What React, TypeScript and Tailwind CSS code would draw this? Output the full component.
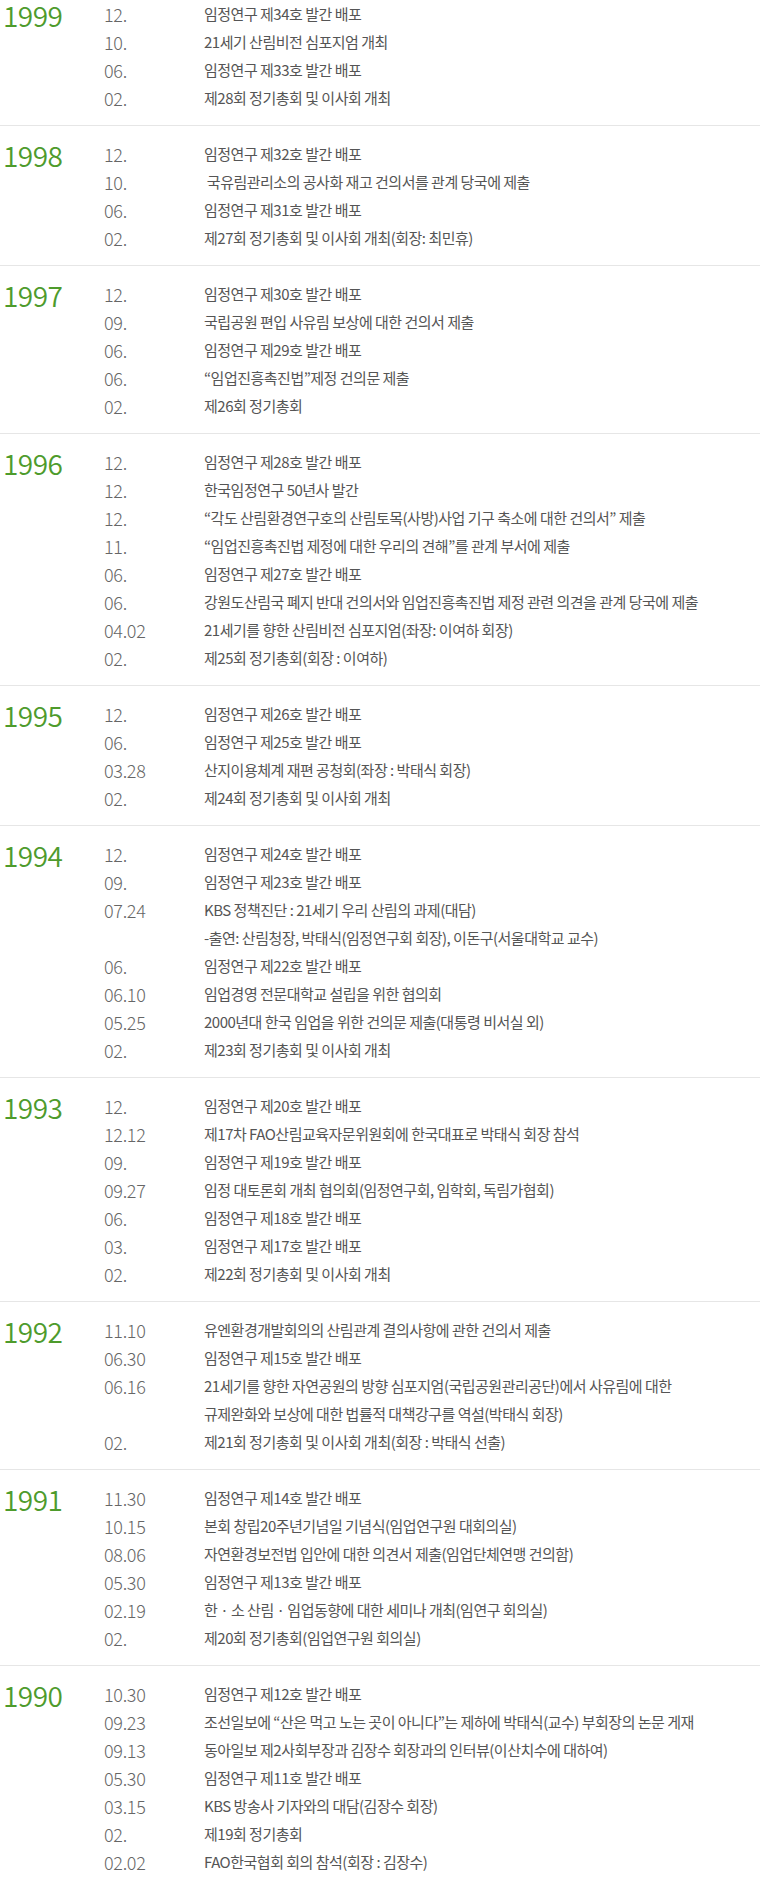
import React from 'react';

type Item = { date: string; text: string };
type Section = { year: string; items: Item[] };

const history: Section[] = [
  {
    year: '1999',
    items: [
      { date: '12.', text: '임정연구 제34호 발간 배포' },
      { date: '10.', text: '21세기 산림비전 심포지엄 개최' },
      { date: '06.', text: '임정연구 제33호 발간 배포' },
      { date: '02.', text: '제28회 정기총회 및 이사회 개최' },
    ],
  },
  {
    year: '1998',
    items: [
      { date: '12.', text: '임정연구 제32호 발간 배포' },
      { date: '10.', text: '\u00a0국유림관리소의 공사화 재고 건의서를 관계 당국에 제출' },
      { date: '06.', text: '임정연구 제31호 발간 배포' },
      { date: '02.', text: '제27회 정기총회 및 이사회 개최(회장: 최민휴)' },
    ],
  },
  {
    year: '1997',
    items: [
      { date: '12.', text: '임정연구 제30호 발간 배포' },
      { date: '09.', text: '국립공원 편입 사유림 보상에 대한 건의서 제출' },
      { date: '06.', text: '임정연구 제29호 발간 배포' },
      { date: '06.', text: '“임업진흥촉진법”제정 건의문 제출' },
      { date: '02.', text: '제26회 정기총회' },
    ],
  },
  {
    year: '1996',
    items: [
      { date: '12.', text: '임정연구 제28호 발간 배포' },
      { date: '12.', text: '한국임정연구 50년사 발간' },
      { date: '12.', text: '“각도 산림환경연구호의 산림토목(사방)사업 기구 축소에 대한 건의서” 제출' },
      { date: '11.', text: '“임업진흥촉진법 제정에 대한 우리의 견해”를 관계 부서에 제출' },
      { date: '06.', text: '임정연구 제27호 발간 배포' },
      { date: '06.', text: '강원도산림국 폐지 반대 건의서와 임업진흥촉진법 제정 관련 의견을 관계 당국에 제출' },
      { date: '04.02', text: '21세기를 향한 산림비전 심포지엄(좌장: 이여하 회장)' },
      { date: '02.', text: '제25회 정기총회(회장 : 이여하)' },
    ],
  },
  {
    year: '1995',
    items: [
      { date: '12.', text: '임정연구 제26호 발간 배포' },
      { date: '06.', text: '임정연구 제25호 발간 배포' },
      { date: '03.28', text: '산지이용체계 재편 공청회(좌장 : 박태식 회장)' },
      { date: '02.', text: '제24회 정기총회 및 이사회 개최' },
    ],
  },
  {
    year: '1994',
    items: [
      { date: '12.', text: '임정연구 제24호 발간 배포' },
      { date: '09.', text: '임정연구 제23호 발간 배포' },
      { date: '07.24', text: 'KBS 정책진단 : 21세기 우리 산림의 과제(대담)' },
      { date: '', text: '-출연: 산림청장, 박태식(임정연구회 회장), 이돈구(서울대학교 교수)' },
      { date: '06.', text: '임정연구 제22호 발간 배포' },
      { date: '06.10', text: '임업경영 전문대학교 설립을 위한 협의회' },
      { date: '05.25', text: '2000년대 한국 임업을 위한 건의문 제출(대통령 비서실 외)' },
      { date: '02.', text: '제23회 정기총회 및 이사회 개최' },
    ],
  },
  {
    year: '1993',
    items: [
      { date: '12.', text: '임정연구 제20호 발간 배포' },
      { date: '12.12', text: '제17차 FAO산림교육자문위원회에 한국대표로 박태식 회장 참석' },
      { date: '09.', text: '임정연구 제19호 발간 배포' },
      { date: '09.27', text: '임정 대토론회 개최 협의회(임정연구회, 임학회, 독림가협회)' },
      { date: '06.', text: '임정연구 제18호 발간 배포' },
      { date: '03.', text: '임정연구 제17호 발간 배포' },
      { date: '02.', text: '제22회 정기총회 및 이사회 개최' },
    ],
  },
  {
    year: '1992',
    items: [
      { date: '11.10', text: '유엔환경개발회의의 산림관계 결의사항에 관한 건의서 제출' },
      { date: '06.30', text: '임정연구 제15호 발간 배포' },
      { date: '06.16', text: '21세기를 향한 자연공원의 방향 심포지엄(국립공원관리공단)에서 사유림에 대한' },
      { date: '', text: '규제완화와 보상에 대한 법률적 대책강구를 역설(박태식 회장)' },
      { date: '02.', text: '제21회 정기총회 및 이사회 개최(회장 : 박태식 선출)' },
    ],
  },
  {
    year: '1991',
    items: [
      { date: '11.30', text: '임정연구 제14호 발간 배포' },
      { date: '10.15', text: '본회 창립20주년기념일 기념식(임업연구원 대회의실)' },
      { date: '08.06', text: '자연환경보전법 입안에 대한 의견서 제출(임업단체연맹 건의함)' },
      { date: '05.30', text: '임정연구 제13호 발간 배포' },
      { date: '02.19', text: '한 · 소 산림 · 임업동향에 대한 세미나 개최(임연구 회의실)' },
      { date: '02.', text: '제20회 정기총회(임업연구원 회의실)' },
    ],
  },
  {
    year: '1990',
    items: [
      { date: '10.30', text: '임정연구 제12호 발간 배포' },
      { date: '09.23', text: '조선일보에 “산은 먹고 노는 곳이 아니다”는 제하에 박태식(교수) 부회장의 논문 게재' },
      { date: '09.13', text: '동아일보 제2사회부장과 김장수 회장과의 인터뷰(이산치수에 대하여)' },
      { date: '05.30', text: '임정연구 제11호 발간 배포' },
      { date: '03.15', text: 'KBS 방송사 기자와의 대담(김장수 회장)' },
      { date: '02.', text: '제19회 정기총회' },
      { date: '02.02', text: 'FAO한국협회 회의 참석(회장 : 김장수)' },
    ],
  },
];

const App: React.FC = () => {
  return (
    <div className="w-[760px] bg-white font-['Noto_Sans_CJK_KR','Noto_Sans',sans-serif]">
      {history.map((section, i) => (
        <div
          key={section.year}
          className={
            i === 0
              ? 'flex pb-[13px] border-b border-[#e6e6e6]'
              : 'flex pt-[14px] pb-[13px] border-b border-[#e6e6e6] last:border-b-0'
          }
        >
          <div className="w-[104px] shrink-0 pl-[3px] text-[28px] leading-[28px] font-[350] tracking-[-0.5px] text-[#4e9b2c] pt-[1px]">
            {section.year}
          </div>
          <ul className="flex-1">
            {section.items.map((item, j) => (
              <li key={j} className="flex h-[28px] items-center">
                <span className="w-[100px] shrink-0 text-[18px] font-light tracking-[-0.3px] text-[#666]">
                  {item.date}
                </span>
                <span className="text-[15px] tracking-[-0.5px] text-[#555] whitespace-nowrap">
                  {item.text}
                </span>
              </li>
            ))}
          </ul>
        </div>
      ))}
    </div>
  );
};

export default App;
